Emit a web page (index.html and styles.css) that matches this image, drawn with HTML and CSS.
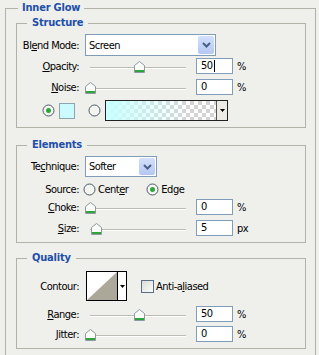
FILE: index.html
```html
<!DOCTYPE html>
<html>
<head>
<meta charset="utf-8">
<link rel="stylesheet" href="styles.css">
</head>
<body>
<fieldset class="group outer">
  <legend>Inner Glow</legend>

  <fieldset class="group sub structure">
    <legend>Structure</legend>
    <div class="row r-select">
      <span class="lbl">Bl<u>e</u>nd Mode:</span>
      <div class="sel sel-blend"><span class="val">Screen</span><span class="btn"><svg width="9" height="6" viewBox="0 0 9 6"><path d="M1 1 L4.5 4.5 L8 1" fill="none" stroke="#4b5f86" stroke-width="2"/></svg></span></div>
    </div>
    <div class="row r-slider g2">
      <span class="lbl"><u>O</u>pacity:</span>
      <div class="slider"><div class="track"></div><svg class="thumb" style="left:49px" width="11" height="12" viewBox="0 0 11 12"><path d="M0.5 11.5 V4.5 L5.5 0.5 L10.5 4.5 V11.5 Z" fill="#fbfbf8" stroke="#8d9aa3"/><rect x="1" y="9" width="9" height="2" fill="#2ea43a"/></svg></div>
      <div class="num">50<span class="caret"></span></div>
      <span class="unit">%</span>
    </div>
    <div class="row r-slider g5">
      <span class="lbl"><u>N</u>oise:</span>
      <div class="slider"><div class="track"></div><svg class="thumb" style="left:0px" width="11" height="12" viewBox="0 0 11 12"><path d="M0.5 11.5 V4.5 L5.5 0.5 L10.5 4.5 V11.5 Z" fill="#fbfbf8" stroke="#8d9aa3"/><rect x="1" y="9" width="9" height="2" fill="#2ea43a"/></svg></div>
      <div class="num">0</div>
      <span class="unit">%</span>
    </div>
    <div class="row r-color g5">
      <svg class="radio" width="13" height="13" viewBox="0 0 13 13"><circle cx="6.5" cy="6.5" r="5.5" fill="#f4f4f0" stroke="#4a5a6a"/><circle cx="6.5" cy="6.5" r="2.5" fill="#2fa63c"/></svg>
      <span class="swatch"></span>
      <svg class="radio radio2" width="13" height="13" viewBox="0 0 13 13"><circle cx="6.5" cy="6.5" r="5.5" fill="#f4f4f0" stroke="#4a5a6a"/></svg>
      <div class="grad"><span class="grad-fill"></span><span class="grad-arrow"><svg width="5" height="3" viewBox="0 0 5 3"><polygon points="0,0 5,0 2.5,3" fill="#000"/></svg></span></div>
    </div>
  </fieldset>

  <fieldset class="group sub elements">
    <legend>Elements</legend>
    <div class="row r-select r-tech">
      <span class="lbl">Te<u>c</u>hnique:</span>
      <div class="sel sel-tech"><span class="val">Softer</span><span class="btn"><svg width="9" height="6" viewBox="0 0 9 6"><path d="M1 1 L4.5 4.5 L8 1" fill="none" stroke="#4b5f86" stroke-width="2"/></svg></span></div>
    </div>
    <div class="row r-source g5">
      <span class="lbl">Source:</span>
      <svg class="radio src1" width="13" height="13" viewBox="0 0 13 13"><circle cx="6.5" cy="6.5" r="5.5" fill="#f4f4f0" stroke="#4a5a6a"/></svg>
      <span class="opt">Cent<u>e</u>r</span>
      <svg class="radio src2" width="13" height="13" viewBox="0 0 13 13"><circle cx="6.5" cy="6.5" r="5.5" fill="#f4f4f0" stroke="#4a5a6a"/><circle cx="6.5" cy="6.5" r="2.5" fill="#2fa63c"/></svg>
      <span class="opt">Ed<u>g</u>e</span>
    </div>
    <div class="row r-slider g3">
      <span class="lbl"><u>C</u>hoke:</span>
      <div class="slider"><div class="track"></div><svg class="thumb" style="left:0px" width="11" height="12" viewBox="0 0 11 12"><path d="M0.5 11.5 V4.5 L5.5 0.5 L10.5 4.5 V11.5 Z" fill="#fbfbf8" stroke="#8d9aa3"/><rect x="1" y="9" width="9" height="2" fill="#2ea43a"/></svg></div>
      <div class="num">0</div>
      <span class="unit">%</span>
    </div>
    <div class="row r-slider g5">
      <span class="lbl"><u>S</u>ize:</span>
      <div class="slider"><div class="track"></div><svg class="thumb" style="left:6px" width="11" height="12" viewBox="0 0 11 12"><path d="M0.5 11.5 V4.5 L5.5 0.5 L10.5 4.5 V11.5 Z" fill="#fbfbf8" stroke="#8d9aa3"/><rect x="1" y="9" width="9" height="2" fill="#2ea43a"/></svg></div>
      <div class="num">5</div>
      <span class="unit">px</span>
    </div>
  </fieldset>

  <fieldset class="group sub quality">
    <legend>Quality</legend>
    <div class="row r-contour">
      <span class="lbl">Contour:</span>
      <div class="contour">
        <svg class="contour-preview" width="30" height="28" viewBox="0 0 30 28"><rect width="30" height="28" fill="#fff"/><polygon points="0,28 30,0 30,28" fill="#aba799"/></svg>
        <span class="contour-arrow"><svg width="5" height="3" viewBox="0 0 5 3"><polygon points="0,0 5,0 2.5,3" fill="#000"/></svg></span>
      </div>
      <span class="check"></span>
      <span class="opt">Anti-a<u>l</u>iased</span>
    </div>
    <div class="row r-slider g5">
      <span class="lbl"><u>R</u>ange:</span>
      <div class="slider"><div class="track"></div><svg class="thumb" style="left:49px" width="11" height="12" viewBox="0 0 11 12"><path d="M0.5 11.5 V4.5 L5.5 0.5 L10.5 4.5 V11.5 Z" fill="#fbfbf8" stroke="#8d9aa3"/><rect x="1" y="9" width="9" height="2" fill="#2ea43a"/></svg></div>
      <div class="num">50</div>
      <span class="unit">%</span>
    </div>
    <div class="row r-slider g4">
      <span class="lbl"><u>J</u>itter:</span>
      <div class="slider"><div class="track"></div><svg class="thumb" style="left:0px" width="11" height="12" viewBox="0 0 11 12"><path d="M0.5 11.5 V4.5 L5.5 0.5 L10.5 4.5 V11.5 Z" fill="#fbfbf8" stroke="#8d9aa3"/><rect x="1" y="9" width="9" height="2" fill="#2ea43a"/></svg></div>
      <div class="num">0</div>
      <span class="unit">%</span>
    </div>
  </fieldset>
</fieldset>
</body>
</html>
```
FILE: styles.css
```css
* { box-sizing: border-box; }
html, body { margin: 0; padding: 0; }
body {
  width: 319px;
  height: 355px;
  overflow: hidden;
  background: #efefeb;
  font-family: "DejaVu Sans Condensed", "DejaVu Sans", sans-serif;
  font-stretch: condensed;
  font-size: 11px;
  letter-spacing: -0.5px;
  color: #000;
}
u { text-decoration: underline; text-underline-offset: 1px; }

.group {
  margin: 0;
  border: 1px solid #b3b2a9;
  min-width: 0;
}
legend {
  color: #1e4fa9;
  font-weight: bold;
  line-height: 14px;
  letter-spacing: -0.2px;
}
.outer {
  margin: 1px 0 0 5px;
  width: 311px;
  padding: 1px 9px 20px 10px;
}
.outer > legend { margin-left: 2px; padding: 0 4px; }
.sub {
  width: 290px;
  padding: 4px 0 6px 0;
}
.sub > legend { margin-left: 10px; padding: 0 5px; }
.elements { margin-top: 10px; }
.quality { margin-top: 8px; padding-top: 6px; }

.row { display: flex; align-items: center; }
.g2 { margin-top: 2px; }
.g3 { margin-top: 3px; }
.g4 { margin-top: 4px; }
.g5 { margin-top: 5px; }
.lbl {
  flex: none;
  width: 62px;
  text-align: right;
  white-space: nowrap;
}

.r-select { height: 22px; }
.r-tech { height: 21px; }
.sel {
  margin-left: 6px;
  height: 100%;
  border: 1px solid #7f9db9;
  background: #fff;
  display: flex;
  align-items: stretch;
}
.sel-blend { width: 131px; }
.sel-tech { width: 72px; }
.sel .val { flex: 1; padding-left: 3px; display: flex; align-items: center; }
.sel .btn {
  width: 16px;
  margin: 1px;
  background: linear-gradient(#d3dffc, #b5c8f3);
  border-radius: 2px;
  display: flex;
  align-items: center;
  justify-content: center;
}

.r-slider { height: 16px; }
.slider {
  position: relative;
  flex: none;
  margin-left: 6px;
  width: 101px;
  height: 16px;
  padding: 9px 0 0 5px;
}
.track {
  height: 2px;
  border-top: 1px solid #bdbcb4;
  border-bottom: 1px solid #fff;
}
.thumb { position: absolute; top: 3px; }
.num {
  flex: none;
  margin-left: 10px;
  width: 37px;
  height: 16px;
  border: 1px solid #7f9db9;
  background: #fff;
  padding-left: 4px;
  line-height: 14px;
  display: flex;
  align-items: center;
}
.caret {
  display: inline-block;
  width: 1px;
  height: 12px;
  background: #000;
  margin-left: 1px;
}
.unit { margin-left: 4px; }

.r-color { height: 21px; padding-left: 25px; }
.radio { flex: none; display: block; }
.swatch {
  flex: none;
  margin-left: 4px;
  width: 16px;
  height: 16px;
  background: #cbfbff;
  border: 1px solid #8ea4b0;
}
.radio2 { margin-left: 13px; }
.grad {
  flex: none;
  margin-left: 4px;
  width: 123px;
  height: 21px;
  border: 1px solid #222;
  display: flex;
}
.grad-fill {
  flex: 1;
  background:
    linear-gradient(to right, #c9ffff 0%, rgba(201, 255, 255, 0.6) 30%, rgba(201, 255, 255, 0) 75%),
    conic-gradient(#d4d4d4 25%, #fff 0 50%, #d4d4d4 0 75%, #fff 0) 0 0 / 8px 8px;
}
.grad-arrow {
  width: 11px;
  border-left: 1px solid #555;
  background: #ecebe6;
  display: flex;
  align-items: center;
  justify-content: center;
}

.r-source { height: 14px; }
.src1 { margin-left: 4px; }
.opt { margin-left: 2px; white-space: nowrap; }
.src2 { margin-left: 18px; }

.r-contour { height: 30px; }
.contour {
  flex: none;
  margin-left: 7px;
  width: 41px;
  height: 30px;
  border: 1px solid #000;
  display: flex;
}
.contour-preview { display: block; }
.contour-arrow {
  flex: 1;
  border-left: 1px solid #000;
  background: #fff;
  display: flex;
  align-items: center;
  justify-content: center;
}
.check {
  flex: none;
  margin-left: 14px;
  width: 13px;
  height: 13px;
  border: 1px solid #5a6f85;
  background: linear-gradient(135deg, #dcdcd6, #fbfbf9);
}
```
